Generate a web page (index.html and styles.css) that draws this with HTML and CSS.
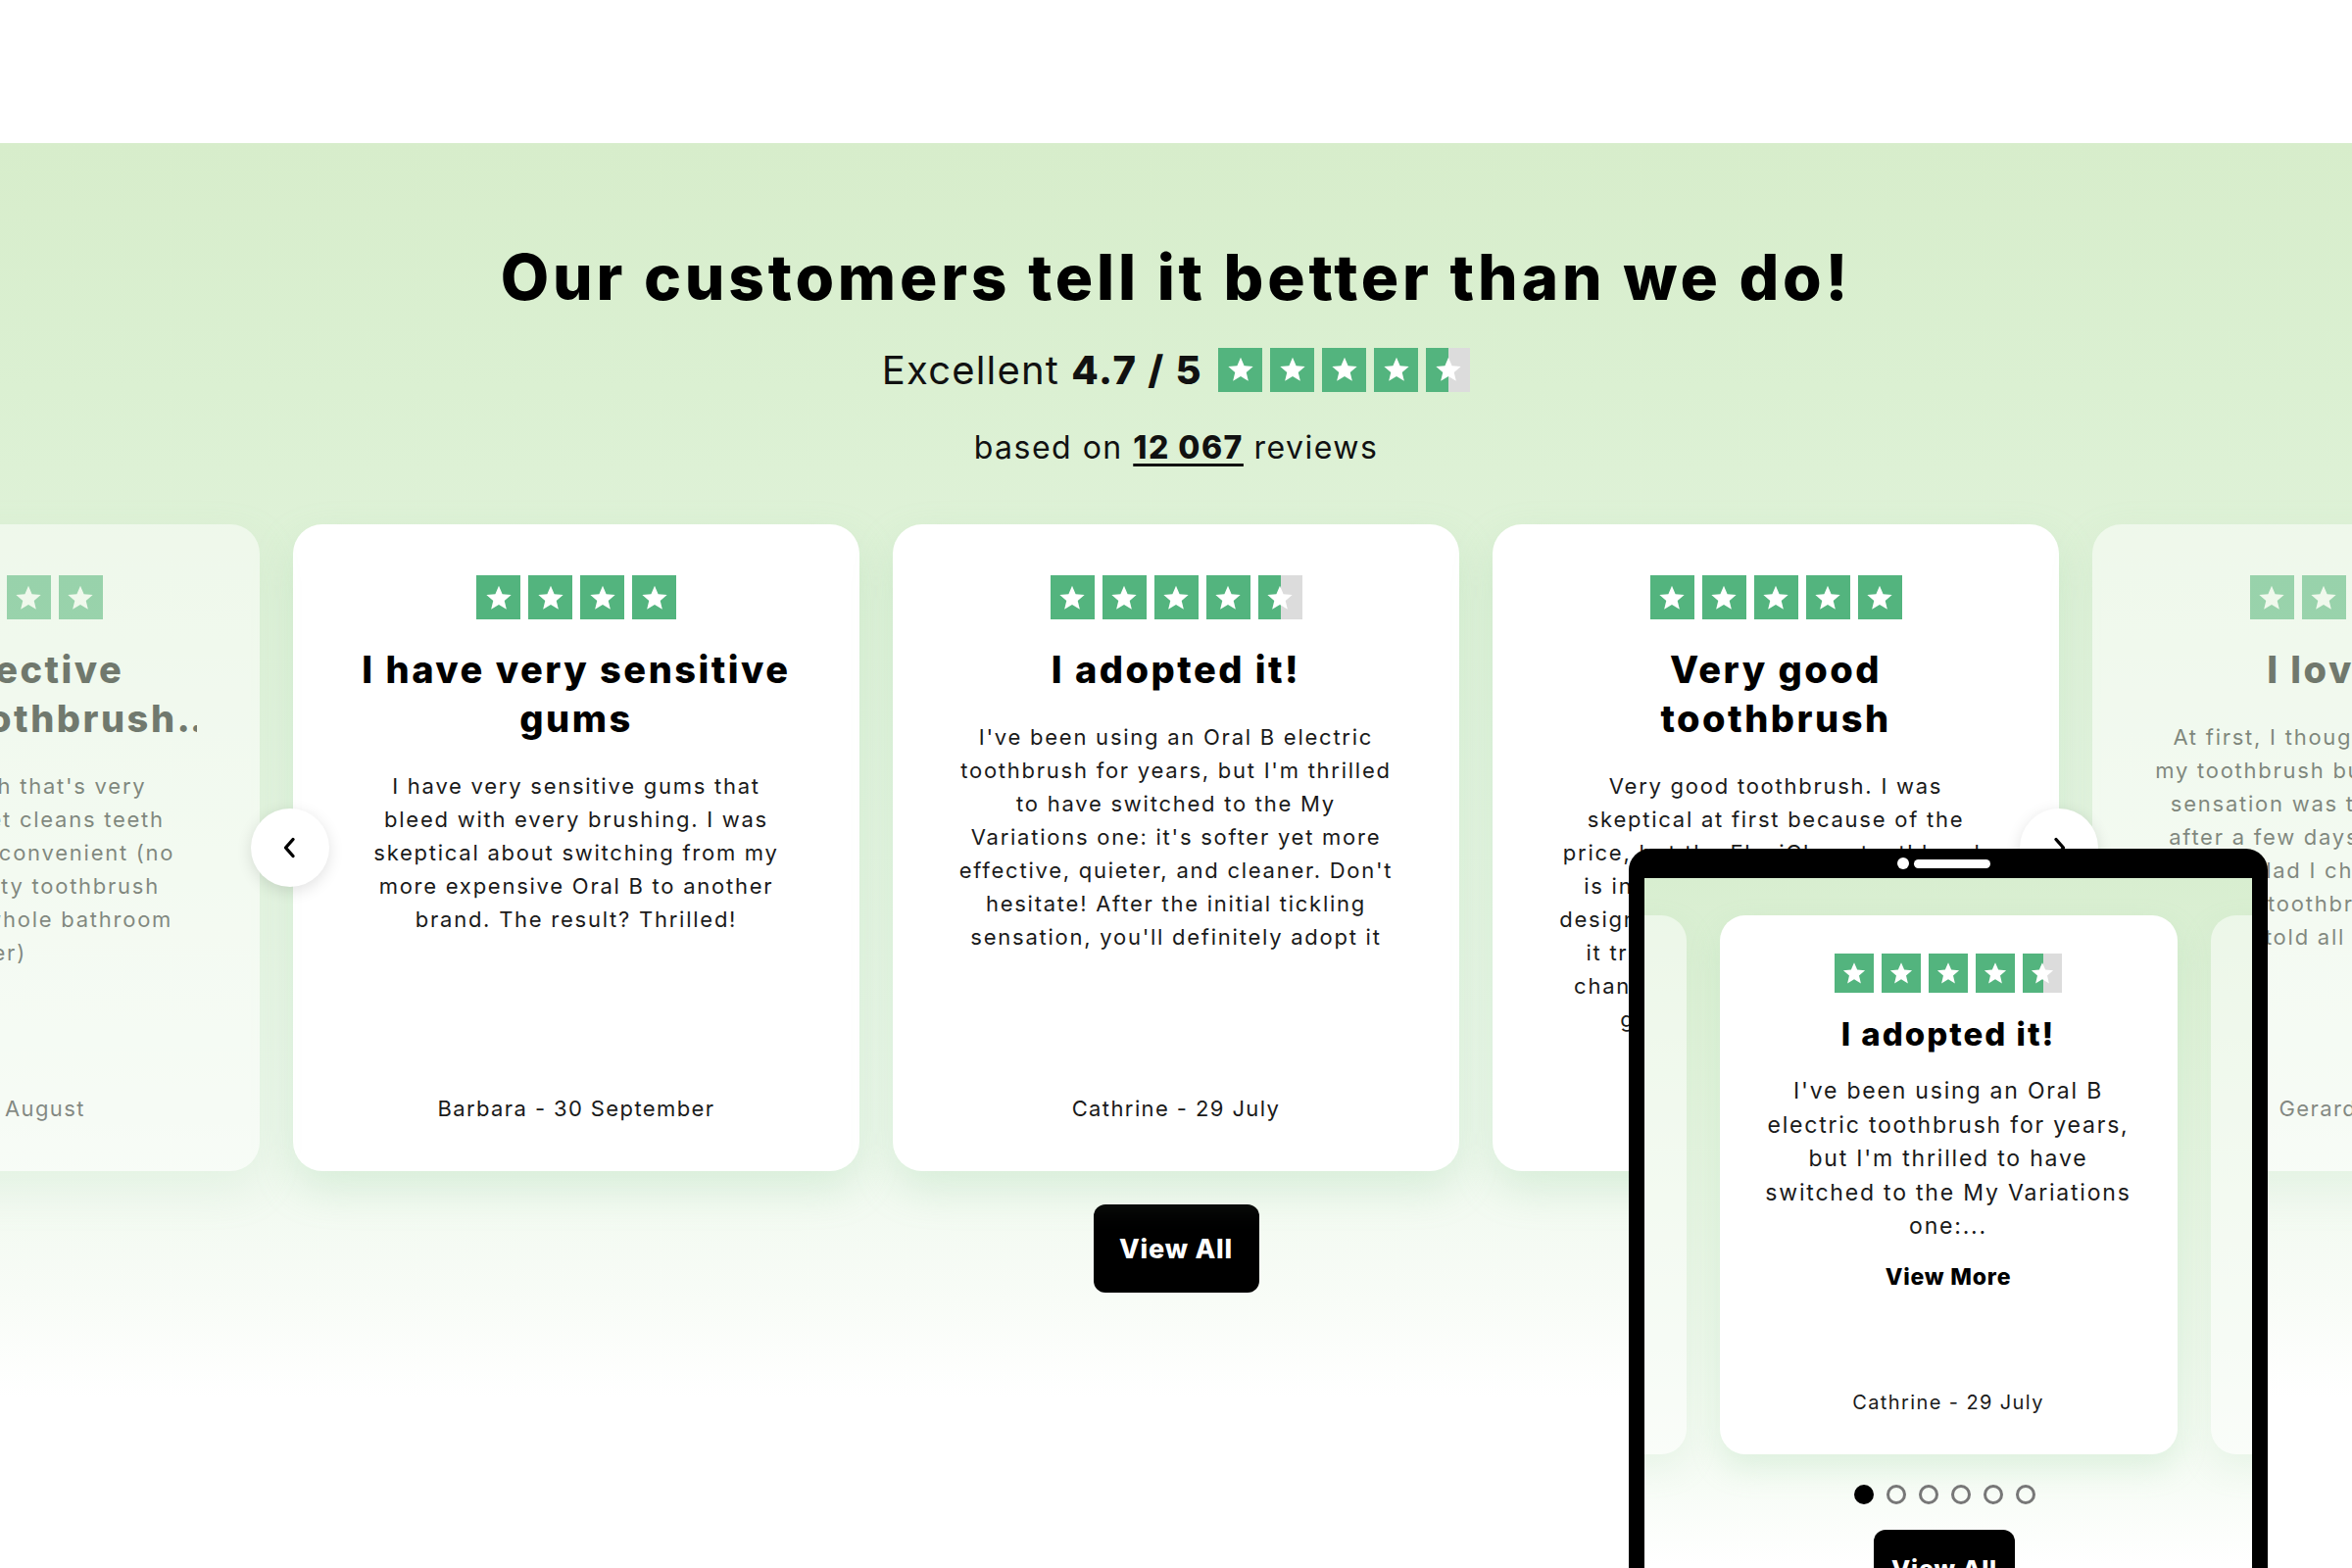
FILE: index.html
```html
<!DOCTYPE html>
<html lang="en">
<head>
<meta charset="utf-8">
<title>Reviews</title>
<link rel="stylesheet" href="styles.css">
</head>
<body>
<div class="topbar"></div>
<section class="reviews">
  <h2 class="heading">Our customers tell it better than we do!</h2>
  <div class="rating">
    <span class="excellent">Excellent</span>
    <b class="score">4.7 / 5</b>
    <div class="stars big">
      <span class="star"><svg viewBox="0 0 24 24"><path d="M12 2.8l2.7 6.3 6.8.6-5.2 4.5 1.6 6.7L12 17.3l-5.9 3.6 1.6-6.7-5.2-4.5 6.8-.6z"/></svg></span>
      <span class="star"><svg viewBox="0 0 24 24"><path d="M12 2.8l2.7 6.3 6.8.6-5.2 4.5 1.6 6.7L12 17.3l-5.9 3.6 1.6-6.7-5.2-4.5 6.8-.6z"/></svg></span>
      <span class="star"><svg viewBox="0 0 24 24"><path d="M12 2.8l2.7 6.3 6.8.6-5.2 4.5 1.6 6.7L12 17.3l-5.9 3.6 1.6-6.7-5.2-4.5 6.8-.6z"/></svg></span>
      <span class="star"><svg viewBox="0 0 24 24"><path d="M12 2.8l2.7 6.3 6.8.6-5.2 4.5 1.6 6.7L12 17.3l-5.9 3.6 1.6-6.7-5.2-4.5 6.8-.6z"/></svg></span>
      <span class="star half"><svg viewBox="0 0 24 24"><path d="M12 2.8l2.7 6.3 6.8.6-5.2 4.5 1.6 6.7L12 17.3l-5.9 3.6 1.6-6.7-5.2-4.5 6.8-.6z"/></svg></span>
    </div>
  </div>
  <p class="based">based on <a href="#" class="count">12 067</a> reviews</p>

  <div class="carousel">
    <div class="track">
      <article class="card faded">
        <div class="stars">
          <span class="star"><svg viewBox="0 0 24 24"><path d="M12 2.8l2.7 6.3 6.8.6-5.2 4.5 1.6 6.7L12 17.3l-5.9 3.6 1.6-6.7-5.2-4.5 6.8-.6z"/></svg></span>
          <span class="star"><svg viewBox="0 0 24 24"><path d="M12 2.8l2.7 6.3 6.8.6-5.2 4.5 1.6 6.7L12 17.3l-5.9 3.6 1.6-6.7-5.2-4.5 6.8-.6z"/></svg></span>
          <span class="star"><svg viewBox="0 0 24 24"><path d="M12 2.8l2.7 6.3 6.8.6-5.2 4.5 1.6 6.7L12 17.3l-5.9 3.6 1.6-6.7-5.2-4.5 6.8-.6z"/></svg></span>
          <span class="star"><svg viewBox="0 0 24 24"><path d="M12 2.8l2.7 6.3 6.8.6-5.2 4.5 1.6 6.7L12 17.3l-5.9 3.6 1.6-6.7-5.2-4.5 6.8-.6z"/></svg></span>
          <span class="star"><svg viewBox="0 0 24 24"><path d="M12 2.8l2.7 6.3 6.8.6-5.2 4.5 1.6 6.7L12 17.3l-5.9 3.6 1.6-6.7-5.2-4.5 6.8-.6z"/></svg></span>
        </div>
        <h3 class="title clamp">Very effective electric toothbrush recommended by my dentist</h3>
        <p class="body">A soft toothbrush that's very effective, quiet yet cleans teeth thoroughly. Really convenient (no more ugly and dirty toothbrush cluttering up the whole bathroom counter)</p>
        <p class="author">Sophie - 12 August</p>
      </article>

      <article class="card">
        <div class="stars">
          <span class="star"><svg viewBox="0 0 24 24"><path d="M12 2.8l2.7 6.3 6.8.6-5.2 4.5 1.6 6.7L12 17.3l-5.9 3.6 1.6-6.7-5.2-4.5 6.8-.6z"/></svg></span>
          <span class="star"><svg viewBox="0 0 24 24"><path d="M12 2.8l2.7 6.3 6.8.6-5.2 4.5 1.6 6.7L12 17.3l-5.9 3.6 1.6-6.7-5.2-4.5 6.8-.6z"/></svg></span>
          <span class="star"><svg viewBox="0 0 24 24"><path d="M12 2.8l2.7 6.3 6.8.6-5.2 4.5 1.6 6.7L12 17.3l-5.9 3.6 1.6-6.7-5.2-4.5 6.8-.6z"/></svg></span>
          <span class="star"><svg viewBox="0 0 24 24"><path d="M12 2.8l2.7 6.3 6.8.6-5.2 4.5 1.6 6.7L12 17.3l-5.9 3.6 1.6-6.7-5.2-4.5 6.8-.6z"/></svg></span>
        </div>
        <h3 class="title">I have very sensitive gums</h3>
        <p class="body">I have very sensitive gums that bleed with every brushing. I was skeptical about switching from my more expensive Oral B to another brand. The result? Thrilled!</p>
        <p class="author">Barbara - 30 September</p>
      </article>

      <article class="card">
        <div class="stars">
          <span class="star"><svg viewBox="0 0 24 24"><path d="M12 2.8l2.7 6.3 6.8.6-5.2 4.5 1.6 6.7L12 17.3l-5.9 3.6 1.6-6.7-5.2-4.5 6.8-.6z"/></svg></span>
          <span class="star"><svg viewBox="0 0 24 24"><path d="M12 2.8l2.7 6.3 6.8.6-5.2 4.5 1.6 6.7L12 17.3l-5.9 3.6 1.6-6.7-5.2-4.5 6.8-.6z"/></svg></span>
          <span class="star"><svg viewBox="0 0 24 24"><path d="M12 2.8l2.7 6.3 6.8.6-5.2 4.5 1.6 6.7L12 17.3l-5.9 3.6 1.6-6.7-5.2-4.5 6.8-.6z"/></svg></span>
          <span class="star"><svg viewBox="0 0 24 24"><path d="M12 2.8l2.7 6.3 6.8.6-5.2 4.5 1.6 6.7L12 17.3l-5.9 3.6 1.6-6.7-5.2-4.5 6.8-.6z"/></svg></span>
          <span class="star half"><svg viewBox="0 0 24 24"><path d="M12 2.8l2.7 6.3 6.8.6-5.2 4.5 1.6 6.7L12 17.3l-5.9 3.6 1.6-6.7-5.2-4.5 6.8-.6z"/></svg></span>
        </div>
        <h3 class="title">I adopted it!</h3>
        <p class="body">I've been using an Oral B electric toothbrush for years, but I'm thrilled to have switched to the My Variations one: it's softer yet more effective, quieter, and cleaner. Don't hesitate! After the initial tickling sensation, you'll definitely adopt it</p>
        <p class="author">Cathrine - 29 July</p>
      </article>

      <article class="card">
        <div class="stars">
          <span class="star"><svg viewBox="0 0 24 24"><path d="M12 2.8l2.7 6.3 6.8.6-5.2 4.5 1.6 6.7L12 17.3l-5.9 3.6 1.6-6.7-5.2-4.5 6.8-.6z"/></svg></span>
          <span class="star"><svg viewBox="0 0 24 24"><path d="M12 2.8l2.7 6.3 6.8.6-5.2 4.5 1.6 6.7L12 17.3l-5.9 3.6 1.6-6.7-5.2-4.5 6.8-.6z"/></svg></span>
          <span class="star"><svg viewBox="0 0 24 24"><path d="M12 2.8l2.7 6.3 6.8.6-5.2 4.5 1.6 6.7L12 17.3l-5.9 3.6 1.6-6.7-5.2-4.5 6.8-.6z"/></svg></span>
          <span class="star"><svg viewBox="0 0 24 24"><path d="M12 2.8l2.7 6.3 6.8.6-5.2 4.5 1.6 6.7L12 17.3l-5.9 3.6 1.6-6.7-5.2-4.5 6.8-.6z"/></svg></span>
          <span class="star"><svg viewBox="0 0 24 24"><path d="M12 2.8l2.7 6.3 6.8.6-5.2 4.5 1.6 6.7L12 17.3l-5.9 3.6 1.6-6.7-5.2-4.5 6.8-.6z"/></svg></span>
        </div>
        <h3 class="title">Very good toothbrush</h3>
        <p class="body">Very good toothbrush. I was skeptical at first because of the price, but the FlexiClean toothbrush is incredibly efficient and smart, designed by dental pros. I'd say that it truly made a difference, it has changed my daily routine. A really great buy, I recommend it!</p>
        <p class="author">Léa - 3 July</p>
      </article>

      <article class="card faded">
        <div class="stars">
          <span class="star"><svg viewBox="0 0 24 24"><path d="M12 2.8l2.7 6.3 6.8.6-5.2 4.5 1.6 6.7L12 17.3l-5.9 3.6 1.6-6.7-5.2-4.5 6.8-.6z"/></svg></span>
          <span class="star"><svg viewBox="0 0 24 24"><path d="M12 2.8l2.7 6.3 6.8.6-5.2 4.5 1.6 6.7L12 17.3l-5.9 3.6 1.6-6.7-5.2-4.5 6.8-.6z"/></svg></span>
          <span class="star"><svg viewBox="0 0 24 24"><path d="M12 2.8l2.7 6.3 6.8.6-5.2 4.5 1.6 6.7L12 17.3l-5.9 3.6 1.6-6.7-5.2-4.5 6.8-.6z"/></svg></span>
          <span class="star"><svg viewBox="0 0 24 24"><path d="M12 2.8l2.7 6.3 6.8.6-5.2 4.5 1.6 6.7L12 17.3l-5.9 3.6 1.6-6.7-5.2-4.5 6.8-.6z"/></svg></span>
          <span class="star"><svg viewBox="0 0 24 24"><path d="M12 2.8l2.7 6.3 6.8.6-5.2 4.5 1.6 6.7L12 17.3l-5.9 3.6 1.6-6.7-5.2-4.5 6.8-.6z"/></svg></span>
        </div>
        <h3 class="title">I love this!</h3>
        <p class="body">At first, I thought the vibrations of my toothbrush buzzing and the tingly sensation was too strong, but then after a few days, I'm used to it. I'm really glad I chose this brush, it's the best toothbrush around and I've told all my friends.</p>
        <p class="author">Gerard - 14 June</p>
      </article>
    </div>
    <button class="arrow prev" aria-label="Previous"><svg viewBox="0 0 24 24"><path d="M15 3.5L7.5 12l7.5 8.5"/></svg></button>
    <button class="arrow next" aria-label="Next"><svg viewBox="0 0 24 24"><path d="M9 3.5l7.5 8.5L9 20.5"/></svg></button>
  </div>

  <div class="cta"><a href="#" class="btn">View All</a></div>

  <div class="phone">
    <div class="bezel"><span class="cam"></span><span class="speaker"></span></div>
    <div class="screen">
      <div class="m-track">
        <div class="m-card faded"></div>
        <article class="m-card">
          <div class="stars small">
            <span class="star"><svg viewBox="0 0 24 24"><path d="M12 2.8l2.7 6.3 6.8.6-5.2 4.5 1.6 6.7L12 17.3l-5.9 3.6 1.6-6.7-5.2-4.5 6.8-.6z"/></svg></span>
            <span class="star"><svg viewBox="0 0 24 24"><path d="M12 2.8l2.7 6.3 6.8.6-5.2 4.5 1.6 6.7L12 17.3l-5.9 3.6 1.6-6.7-5.2-4.5 6.8-.6z"/></svg></span>
            <span class="star"><svg viewBox="0 0 24 24"><path d="M12 2.8l2.7 6.3 6.8.6-5.2 4.5 1.6 6.7L12 17.3l-5.9 3.6 1.6-6.7-5.2-4.5 6.8-.6z"/></svg></span>
            <span class="star"><svg viewBox="0 0 24 24"><path d="M12 2.8l2.7 6.3 6.8.6-5.2 4.5 1.6 6.7L12 17.3l-5.9 3.6 1.6-6.7-5.2-4.5 6.8-.6z"/></svg></span>
            <span class="star half"><svg viewBox="0 0 24 24"><path d="M12 2.8l2.7 6.3 6.8.6-5.2 4.5 1.6 6.7L12 17.3l-5.9 3.6 1.6-6.7-5.2-4.5 6.8-.6z"/></svg></span>
          </div>
          <h3 class="m-title">I adopted it!</h3>
          <p class="m-body">I've been using an Oral B electric toothbrush for years, but I'm thrilled to have switched to the My Variations one:...</p>
          <a href="#" class="m-more">View More</a>
          <p class="m-author">Cathrine - 29 July</p>
        </article>
        <div class="m-card faded"></div>
      </div>
      <div class="dots">
        <span class="dot active"></span><span class="dot"></span><span class="dot"></span><span class="dot"></span><span class="dot"></span><span class="dot"></span>
      </div>
      <div class="m-cta"><a href="#" class="btn m-btn">View All</a></div>
    </div>
  </div>
</section>
</body>
</html>
```

FILE: styles.css
```css
* { box-sizing: border-box; margin: 0; padding: 0; }

html, body {
  width: 2400px;
  height: 1600px;
  overflow: hidden;
  background: #fff;
}

body {
  font-family: Inter, "Liberation Sans", sans-serif;
  color: #111;
}

.topbar {
  height: 146px;
  background: #fff;
}

.reviews {
  position: relative;
  height: 1454px;
  overflow: hidden;
  padding-top: 97px;
  background: linear-gradient(180deg, #d7edcb 0px, #dbf0d2 250px, #e4f4df 600px, #eef8ec 1000px, #f8fcf7 1180px, #ffffff 1280px);
}

.heading {
  font-size: 64px;
  line-height: 80px;
  font-weight: 800;
  text-align: center;
  color: #000;
  letter-spacing: 3.8px;
}

.rating {
  margin-top: 29px;
  height: 50px;
  display: flex;
  justify-content: center;
  align-items: center;
  font-size: 40px;
  color: #111;
}

.excellent { font-weight: 400; letter-spacing: 1.2px; }
.score { font-weight: 800; margin-left: 12px; margin-right: 16px; letter-spacing: 1.7px; }

.stars {
  display: flex;
  justify-content: center;
  gap: 8px;
}

.star {
  width: 45px;
  height: 45px;
  background: #53b47e;
  display: flex;
  align-items: center;
  justify-content: center;
}

.star svg {
  width: 32px;
  height: 32px;
  fill: #fff;
}

.star.half {
  background: linear-gradient(90deg, #53b47e 52%, #dcdcdc 52%);
}

.based {
  margin-top: 35px;
  text-align: center;
  font-size: 32px;
  line-height: 40px;
  letter-spacing: 1.5px;
  color: #111;
}

.count {
  color: #111;
  font-weight: 800;
  text-decoration: underline;
  text-decoration-thickness: 3px;
  text-underline-offset: 5px;
}

.carousel {
  position: relative;
  margin-top: 58px;
}

.track {
  display: flex;
  justify-content: center;
  gap: 34px;
}

.card {
  flex: 0 0 578px;
  height: 660px;
  background: #fff;
  border-radius: 30px;
  padding: 52px 64px 47px;
  display: flex;
  flex-direction: column;
  align-items: center;
  text-align: center;
  box-shadow: 0 18px 40px rgba(150, 210, 160, 0.28);
}

.card.faded { opacity: 0.5; }

.title {
  margin-top: 26px;
  font-size: 38px;
  line-height: 50px;
  font-weight: 800;
  letter-spacing: 2.5px;
  color: #000;
}

.title.clamp {
  display: -webkit-box;
  -webkit-line-clamp: 2;
  -webkit-box-orient: vertical;
  overflow: hidden;
}

.body {
  margin-top: 27px;
  font-size: 22px;
  line-height: 34px;
  letter-spacing: 1.75px;
  color: #1a1a1a;
}

.author {
  margin-top: auto;
  font-size: 22px;
  line-height: 34px;
  letter-spacing: 1.4px;
  color: #1a1a1a;
}

.arrow {
  position: absolute;
  top: 290px;
  width: 80px;
  height: 80px;
  border: none;
  border-radius: 50%;
  background: #fff;
  box-shadow: 0 4px 16px rgba(0, 0, 0, 0.12);
  display: flex;
  align-items: center;
  justify-content: center;
}

.arrow svg {
  width: 24px;
  height: 24px;
  fill: none;
  stroke: #000;
  stroke-width: 3.4;
  stroke-linecap: round;
  stroke-linejoin: round;
}

.arrow.prev { left: 256px; }
.arrow.next { left: 2061px; }

.cta {
  margin-top: 34px;
  display: flex;
  justify-content: center;
}

.btn {
  display: flex;
  align-items: center;
  justify-content: center;
  width: 169px;
  height: 90px;
  background: #000;
  color: #fff;
  border-radius: 12px;
  font-size: 27px;
  font-weight: 800;
  text-decoration: none;
  letter-spacing: 0.8px;
}

/* phone mockup overlay */
.phone {
  position: absolute;
  left: 1662px;
  top: 720px;
  width: 652px;
  height: 820px;
  background: #000;
  border-radius: 22px 22px 0 0;
  padding: 0 16px;
}

.bezel {
  height: 30px;
  display: flex;
  align-items: center;
  justify-content: center;
  gap: 5px;
  padding-right: 10px;
}

.cam {
  width: 12px;
  height: 12px;
  border-radius: 50%;
  background: #fff;
}

.speaker {
  width: 78px;
  height: 9px;
  border-radius: 5px;
  background: #fff;
}

.screen {
  height: 790px;
  overflow: hidden;
  padding-top: 38px;
  background: linear-gradient(180deg, #d8eed0 0px, #e2f3dc 200px, #eef8ec 480px, #f7fcf6 620px, #fff 700px);
}

.m-track {
  display: flex;
  justify-content: center;
  gap: 34px;
}

.m-card {
  flex: 0 0 467px;
  height: 550px;
  background: #fff;
  border-radius: 26px;
  padding: 39px 44px 38px;
  display: flex;
  flex-direction: column;
  align-items: center;
  text-align: center;
  box-shadow: 0 14px 30px rgba(150, 210, 160, 0.25);
}

.m-card.faded { opacity: 0.5; }

.stars.small .star { width: 40px; height: 40px; }
.stars.small .star svg { width: 28px; height: 28px; }

.m-title {
  margin-top: 21px;
  font-size: 33px;
  line-height: 42px;
  font-weight: 800;
  letter-spacing: 2px;
  color: #000;
}

.m-body {
  margin-top: 20px;
  font-size: 23px;
  line-height: 34.5px;
  letter-spacing: 1.8px;
  color: #1a1a1a;
}

.m-more {
  margin-top: 18px;
  font-size: 23px;
  line-height: 32px;
  font-weight: 800;
  letter-spacing: 0.8px;
  color: #000;
  text-decoration: none;
}

.m-author {
  margin-top: auto;
  font-size: 20px;
  line-height: 30px;
  letter-spacing: 1.4px;
  color: #1a1a1a;
}

.dots {
  margin-top: 31px;
  display: flex;
  justify-content: center;
  gap: 13px;
  padding-right: 8px;
}

.dot {
  width: 20px;
  height: 20px;
  border-radius: 50%;
  border: 3px solid #777;
}

.dot.active {
  background: #000;
  border-color: #000;
}

.m-cta {
  margin-top: 26px;
  display: flex;
  justify-content: center;
  padding-right: 8px;
}

.m-btn {
  width: 144px;
  height: 80px;
  font-size: 25px;
}
```
